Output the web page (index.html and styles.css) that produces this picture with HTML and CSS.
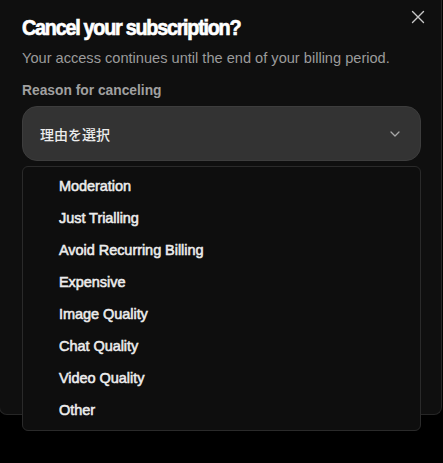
FILE: index.html
```html
<!DOCTYPE html>
<html lang="en">
<head>
<meta charset="utf-8">
<title>Cancel subscription</title>
<link rel="stylesheet" href="styles.css">
</head>
<body>
<div class="modal">
  <button class="close" aria-label="Close">
    <svg width="14" height="14" viewBox="0 0 14 14"><path d="M1.5 1.5 L12.5 12.5 M12.5 1.5 L1.5 12.5" stroke="#c8c8c8" stroke-width="1.4" stroke-linecap="round" fill="none"/></svg>
  </button>
  <h1 class="title">Cancel your subscription?</h1>
  <p class="subtitle">Your access continues until the end of your billing period.</p>
  <div class="label">Reason for canceling</div>
  <div class="select">
    <span class="select-text">理由を選択</span>
    <svg class="chevron" width="10" height="6" viewBox="0 0 10 6"><path d="M1 1 L5 5 L9 1" stroke="#a8a8a8" stroke-width="1.3" fill="none" stroke-linecap="round" stroke-linejoin="round"/></svg>
  </div>
</div>
<ul class="menu">
  <li>Moderation</li>
  <li>Just Trialling</li>
  <li>Avoid Recurring Billing</li>
  <li>Expensive</li>
  <li>Image Quality</li>
  <li>Chat Quality</li>
  <li>Video Quality</li>
  <li>Other</li>
</ul>
</body>
</html>
```

FILE: styles.css
```css
html, body {
  margin: 0;
  padding: 0;
  background: #000;
  width: 443px;
  height: 463px;
  overflow: hidden;
  font-family: "Liberation Sans", Arial, sans-serif;
}
.modal {
  position: relative;
  box-sizing: border-box;
  width: 443px;
  height: 415px;
  margin-left: -1px;
  background: #0f0f0f;
  border: 1px solid #262626;
  border-top: none;
  border-radius: 0 0 8px 8px;
  padding: 14px 0 0 22px;
}
.close {
  position: absolute;
  right: 16px;
  top: 10px;
  width: 14px;
  height: 14px;
  padding: 0;
  border: none;
  background: none;
  display: flex;
}
.title {
  margin: 0;
  font-size: 22px;
  line-height: 28px;
  font-weight: 700;
  color: #fff;
  letter-spacing: -1.4px;
  -webkit-text-stroke: 0.7px #fff;
  transform: scaleX(0.9);
  transform-origin: left center;
  white-space: nowrap;
}
.subtitle {
  margin: 6px 0 0;
  font-size: 14.6px;
  line-height: 20px;
  color: #9b9b9b;
}
.label {
  margin-top: 13px;
  font-size: 13.8px;
  line-height: 20px;
  font-weight: 700;
  color: #a0a0a0;
}
.select {
  box-sizing: border-box;
  margin-top: 5px;
  width: 399px;
  height: 55px;
  border-radius: 15px;
  background: #333;
  border: 1px solid #3d3d3d;
  display: flex;
  align-items: center;
  justify-content: space-between;
  padding: 0 20px 0 17px;
}
.select-text {
  font-family: "Noto Sans CJK JP", sans-serif;
  font-size: 14px;
  font-weight: 500;
  color: #ececec;
}
.menu {
  position: absolute;
  left: 22px;
  top: 166px;
  box-sizing: border-box;
  width: 399px;
  height: 265px;
  margin: 0;
  padding: 3px 0 4px 36px;
  list-style: none;
  background: #0e0e0e;
  border: 1px solid #2a2a2a;
  border-radius: 6px;
}
.menu li {
  height: 32px;
  line-height: 32px;
  font-size: 14.5px;
  font-weight: 400;
  color: #ececec;
  letter-spacing: -0.05px;
  -webkit-text-stroke: 0.55px #ececec;
}
```
